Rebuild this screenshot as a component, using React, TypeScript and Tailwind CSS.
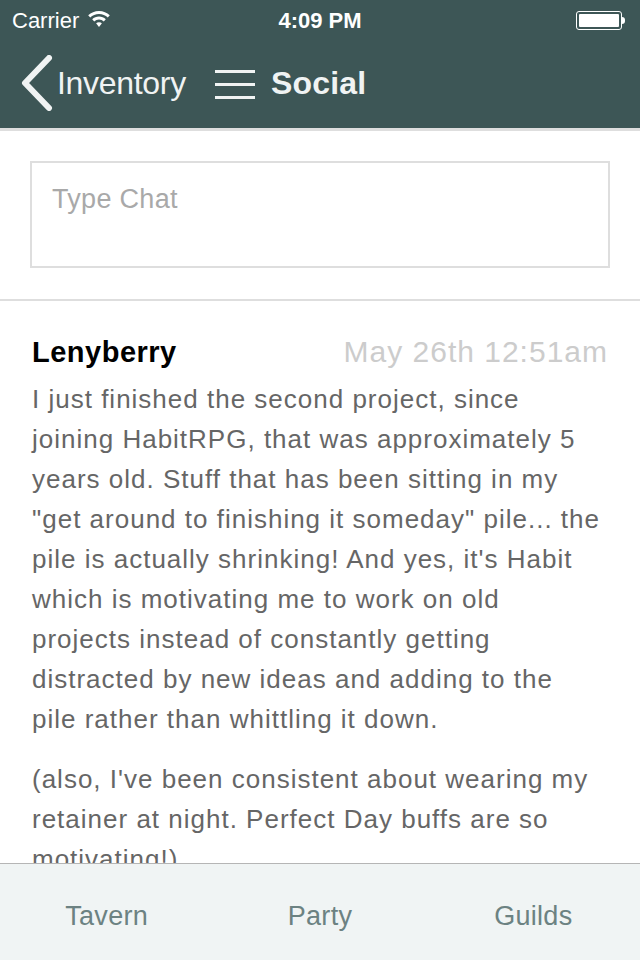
import React from "react";

const font = { fontFamily: '"Liberation Sans", Arial, sans-serif' };

const firstParagraph = [
  "I just finished the second project, since",
  "joining HabitRPG, that was approximately 5",
  "years old. Stuff that has been sitting in my",
  '"get around to finishing it someday" pile... the',
  "pile is actually shrinking! And yes, it's Habit",
  "which is motivating me to work on old",
  "projects instead of constantly getting",
  "distracted by new ideas and adding to the",
  "pile rather than whittling it down.",
];

const secondParagraph = [
  "(also, I've been consistent about wearing my",
  "retainer at night. Perfect Day buffs are so",
  "motivating!)",
];

function Wifi() {
  return (
    <svg width="22" height="17" viewBox="0 0 22 17" fill="white">
      <path d="M11 0C6.8 0 3 1.6 0.2 4.3l2 2.1C4.5 4.2 7.6 2.9 11 2.9s6.5 1.3 8.8 3.5l2-2.1C19 1.6 15.2 0 11 0z" />
      <path d="M11 5.6c-2.6 0-5 1-6.8 2.7l2 2.1c1.3-1.2 3-2 4.8-2s3.5 0.8 4.8 2l2-2.1C16 6.6 13.6 5.6 11 5.6z" />
      <path d="M11 11.2c-1.1 0-2.1 0.4-2.9 1.1L11 16l2.9-3.7c-0.8-0.7-1.8-1.1-2.9-1.1z" />
    </svg>
  );
}

function Battery() {
  return (
    <div className="flex items-center">
      <div className="flex h-[19px] w-[46px] items-center rounded-[3px] border border-white p-[2px]">
        <div className="h-full w-full rounded-[1px] bg-white" />
      </div>
      <div className="h-[7px] w-[3px] rounded-r-sm bg-white" />
    </div>
  );
}

export default function App() {
  return (
    <div className="flex h-[960px] w-[640px] flex-col overflow-hidden bg-white" style={font}>
      <header className="bg-[#3d5656] text-white">
        <div className="relative flex h-[40px] items-center px-[12px]">
          <span className="text-[22px]">Carrier</span>
          <span className="ml-[9px] mt-[-2px]">
            <Wifi />
          </span>
          <span className="absolute left-1/2 -translate-x-1/2 text-[22px] font-bold">4:09 PM</span>
          <span className="ml-auto mr-[3px]">
            <Battery />
          </span>
        </div>
        <div className="flex h-[88px] items-center pb-[2px]">
          <svg width="36" height="56" viewBox="0 0 36 56" className="ml-[18px]">
            <path d="M31 3 L7 28 L31 53" stroke="#f0f3f3" strokeWidth="6" fill="none" strokeLinecap="round" strokeLinejoin="round" />
          </svg>
          <span className="ml-[3px] text-[32px] font-light tracking-[-0.3px] text-[#f0f3f3]">Inventory</span>
          <div className="ml-[29px] mt-[2px] flex flex-col gap-[10px]">
            <div className="h-[3px] w-[40px] bg-[#f0f3f3]" />
            <div className="h-[3px] w-[40px] bg-[#f0f3f3]" />
            <div className="h-[3px] w-[40px] bg-[#f0f3f3]" />
          </div>
          <span className="ml-[16px] text-[32px] font-bold tracking-[0.2px] text-[#f0f3f3]">Social</span>
        </div>
      </header>
      <div className="h-[3px] bg-[#dedede]" />

      <div className="flex-1 overflow-hidden">
        <div className="px-[30px] pb-[31px] pt-[30px]">
          <div className="h-[107px] border-2 border-[#dedede] px-[20px] pt-[16px] text-[27px] tracking-[0.3px] text-[#a9a9a9]">
            Type Chat
          </div>
        </div>
        <div className="h-[2px] bg-[#dedede]" />

        <div className="pl-[32px] pr-[32px] pt-[28px]">
          <div className="flex items-baseline justify-between">
            <span className="text-[29px] font-bold tracking-[0.5px] text-black">Lenyberry</span>
            <span className="text-[30px] tracking-[1px] text-[#cccccc]">May 26th 12:51am</span>
          </div>
          <div className="mt-[4px] whitespace-nowrap text-[26px] leading-[40px] tracking-[1px] text-[#666666]">
            <p>
              {firstParagraph.map((line) => (
                <span key={line} className="block">
                  {line}
                </span>
              ))}
            </p>
            <p className="mt-[20px]">
              {secondParagraph.map((line) => (
                <span key={line} className="block">
                  {line}
                </span>
              ))}
            </p>
          </div>
        </div>
      </div>

      <nav className="grid h-[97px] grid-cols-3 border-t border-[#b5b5b5] bg-[#f0f4f4] pt-[8px] text-[27px] tracking-[0.3px] text-[#6c8282]">
        <span className="flex items-center justify-center">Tavern</span>
        <span className="flex items-center justify-center">Party</span>
        <span className="flex items-center justify-center">Guilds</span>
      </nav>
    </div>
  );
}
